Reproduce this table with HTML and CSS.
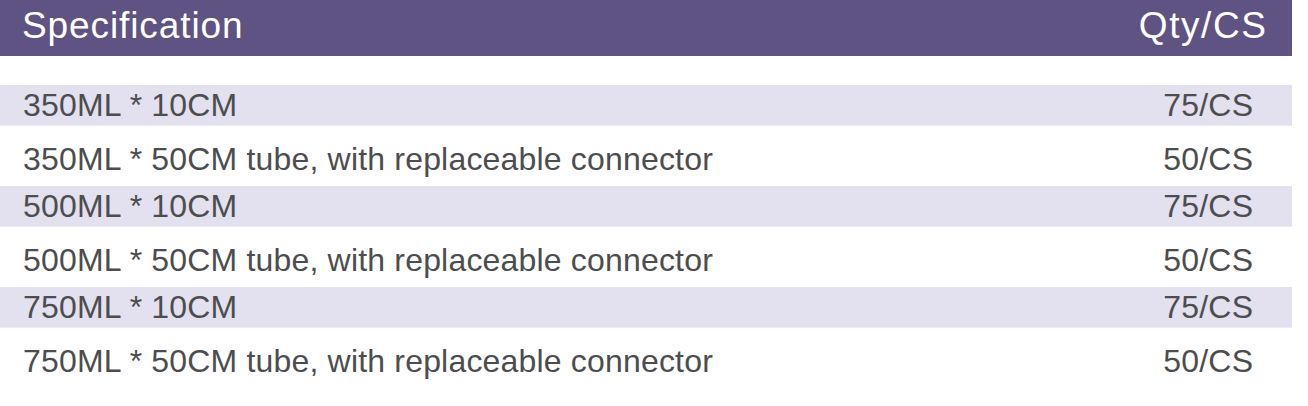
FILE: index.html
```html
<!DOCTYPE html>
<html lang="en">
<head>
<meta charset="utf-8">
<title>Specification</title>
<link rel="stylesheet" href="styles.css">
</head>
<body>
<div class="spec-table">
  <div class="head">
    <span class="head-spec">Specification</span>
    <span class="head-qty">Qty/CS</span>
  </div>
  <div class="rows">
    <div class="row band"><span>350ML * 10CM</span><span class="qty">75/CS</span></div>
    <div class="row plain"><span>350ML * 50CM tube, with replaceable connector</span><span class="qty">50/CS</span></div>
    <div class="row band"><span>500ML * 10CM</span><span class="qty">75/CS</span></div>
    <div class="row plain"><span>500ML * 50CM tube, with replaceable connector</span><span class="qty">50/CS</span></div>
    <div class="row band"><span>750ML * 10CM</span><span class="qty">75/CS</span></div>
    <div class="row plain"><span>750ML * 50CM tube, with replaceable connector</span><span class="qty">50/CS</span></div>
  </div>
</div>
</body>
</html>
```

FILE: styles.css
```css
html, body {
  margin: 0;
  padding: 0;
  background: #ffffff;
}

body {
  width: 1308px;
  height: 406px;
  overflow: hidden;
  font-family: "Liberation Sans", Arial, Helvetica, sans-serif;
}

.spec-table {
  width: 1292px;
  display: flex;
  flex-direction: column;
}

.head {
  height: 56px;
  background: #5f5384;
  color: #ffffff;
  display: flex;
  justify-content: space-between;
  align-items: flex-start;
  padding: 5px 26px 0 22px;
  box-sizing: border-box;
  font-size: 37px;
  line-height: 42px;
  letter-spacing: 0.9px;
}

.head-qty {
  letter-spacing: 1.6px;
  margin-right: -1.6px;
}

.rows {
  display: flex;
  flex-direction: column;
  padding-top: 29px;
}

.row {
  display: flex;
  justify-content: space-between;
  box-sizing: border-box;
  padding: 0 39px 0 23px;
  color: #4d4d4f;
  font-size: 32px;
  line-height: 40px;
  letter-spacing: 0.18px;
}

.qty {
  margin-right: -0.18px;
}

.band {
  height: 41px;
  background: #e3e0ef;
  border-bottom: 1px solid #ecEAf3;
}

.plain {
  height: 60px;
  padding-top: 13px;
}
```
